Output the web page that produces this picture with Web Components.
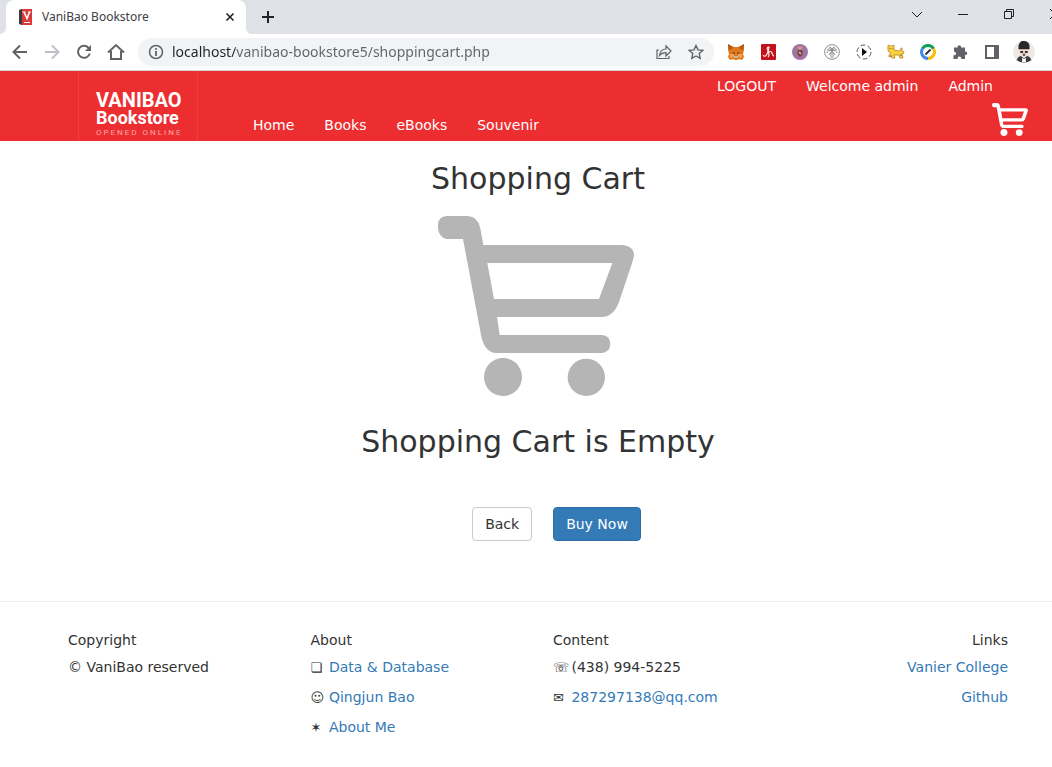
<!DOCTYPE html>
<html lang="en">
<head>
<meta charset="utf-8">
<title>VaniBao Bookstore</title>
<style>
html,body{margin:0;background:#fff;overflow-x:hidden}
body{font:14px/20px "DejaVu Sans",Verdana,sans-serif;color:#333}
</style>
</head>
<body>
<browser-frame>
  <browser-tabs></browser-tabs>
  <browser-toolbar></browser-toolbar>
</browser-frame>
<site-header></site-header>
<empty-cart></empty-cart>
<site-footer>
  <footer-column heading="Copyright">
    <footer-item>© VaniBao reserved</footer-item>
  </footer-column>
  <footer-column heading="About">
    <footer-item icon="❏" href="#data">Data &amp; Database</footer-item>
    <footer-item icon="☺" href="#author">Qingjun Bao</footer-item>
    <footer-item icon="✶" href="#about">About Me</footer-item>
  </footer-column>
  <footer-column heading="Content">
    <footer-item icon="☏">(438) 994-5225</footer-item>
    <footer-item icon="✉" href="#mail">287297138@qq.com</footer-item>
  </footer-column>
  <footer-column heading="Links" class="end">
    <footer-item href="#vanier">Vanier College</footer-item>
    <footer-item href="#github">Github</footer-item>
  </footer-column>
</site-footer>

<script>
const define = (name, html, setup) => customElements.define(name, class extends HTMLElement {
  constructor() {
    super();
    const t = document.createElement('template');
    t.innerHTML = html;
    this.attachShadow({mode: 'open'}).append(t.content.cloneNode(true));
  }
  connectedCallback() { if (setup) setup(this, this.shadowRoot); }
});

define('cart-icon', `
<style>:host{display:block;line-height:0}svg{width:100%;height:100%;fill:currentColor}</style>
<svg viewBox="54 198 588 540" aria-hidden="true">
<path fill-rule="evenodd" d="M80 198H142Q175 200 181 235L190 285H605Q643 288 642 318L636 340L597 456Q581 500 545 501H231L239 555H545Q571 557 571 582Q570 607 545 609H228Q195 607 184 560L129 267H80Q56 262 54 235V222Q56 200 80 198ZM202 339L222 447H537L577 339Z"/>
<circle cx="249" cy="681" r="57"/><circle cx="499" cy="682" r="56"/></svg>`);

define('browser-frame', `
<style>:host{display:block;background:#dee1e6;border-bottom:1px solid #d3d5d8;overflow:hidden;font-family:"Noto Sans","Open Sans",sans-serif}</style>
<slot></slot>`);

define('browser-tabs', `
<style>
:host{display:flex;height:34px;align-items:stretch;color:#3c4043}
button{border:0;background:none;padding:0;display:grid;place-items:center}
svg{display:block;fill:none;stroke:#202124}
.edge{width:6px;background:#fff}.edge i{display:block;height:100%;background:#dee1e6;border-bottom-right-radius:6px}
.edge.r i{border-radius:0 0 0 6px}
.tab{display:flex;align-items:center;width:240px;box-sizing:border-box;padding:0 8px 0 12px;background:#fff;border-radius:8px 8px 0 0;font-size:12px;line-height:16px}
.tab span{flex:1;padding-left:8px}
.tab button{width:16px;height:16px}
.new{width:32px}
.win{margin-left:auto;margin-right:-26px;display:flex;height:28px}
.win button{width:46px}
</style>
<div class="edge"><i></i></div>
<div class="tab">
<svg width="16" height="16" viewBox="0 0 16 16" style="stroke:none"><path fill="#dc3a36" d="M3 0h11v16H3z"/><path fill="#403a3a" d="M1 1L4 0V16L1 15Z"/><path d="M6 3l3 6.500 2.500-6.500" stroke="#fff" stroke-width="1.600"/><path d="M4.500 3h3M10 3h3M6 13.500h6" stroke="#fff"/></svg>
<span>VaniBao Bookstore</span>
<button aria-label="Close tab"><svg width="16" height="16" viewBox="0 0 16 16"><path stroke-width="1.600" d="M4.500 4.500l7 7M11.500 4.500l-7 7"/></svg></button>
</div>
<div class="edge r"><i></i></div>
<button class="new" aria-label="New tab"><svg width="16" height="16" viewBox="0 0 16 16"><path stroke-width="2" d="M8 2v12M2 8h12"/></svg></button>
<div class="win">
<button aria-label="Search tabs"><svg width="16" height="16" viewBox="0 0 16 16"><path d="M3 6l5 5 5-5"/></svg></button>
<button aria-label="Minimise"><svg width="16" height="16" viewBox="0 0 16 16"><path d="M3 8.500h10"/></svg></button>
<button aria-label="Restore"><svg width="16" height="16" viewBox="0 0 16 16"><path d="M3.500 5.500h7v7h-7zM5.500 5V3.500h7v7H11"/></svg></button>
<button aria-label="Close window"><svg width="16" height="16" viewBox="0 0 16 16"><path d="M3 3l10 10M13 3L3 13"/></svg></button>
</div>`);

define('browser-toolbar', `
<style>
:host{display:flex;height:36px;align-items:center;background:#fff;padding-left:4px;padding-right:28px}
button{border:0;background:none;padding:0;width:32px;height:32px;display:grid;place-items:center;flex:none}
svg{display:block;fill:none;stroke:#5f6368;stroke-width:2}
.omni{flex:1;min-width:0;height:28px;margin:0 6px;border-radius:14px;background:#f1f3f4;display:flex;align-items:center;padding:0 2px 0 10px}
input{flex:1;min-width:0;border:0;outline:0;padding:0 0 2px;margin-left:8px;height:24px;font:14px/20px "Noto Sans","Open Sans",sans-serif;color:#5f6368;background:linear-gradient(90deg,#202124 63px,#5f6368 63px);-webkit-background-clip:text;background-clip:text;-webkit-text-fill-color:transparent}
.n{stroke:none}
.me{margin-right:-16px}
</style>
<button aria-label="Back"><svg width="16" height="16" viewBox="0 0 16 16"><path d="M15 8H2M8 1.500L1.500 8 8 14.500"/></svg></button>
<button aria-label="Forward"><svg width="16" height="16" viewBox="0 0 16 16" style="stroke:#bdc1c6"><path d="M1 8h13M8 1.500L14.500 8 8 14.500"/></svg></button>
<button aria-label="Reload"><svg width="16" height="16" viewBox="0 0 16 16"><path d="M13.800 9.500A6 6 0 1 1 12.500 3.800L14 5.500"/><path class="n" fill="#5f6368" d="M15 1v6H9z"/></svg></button>
<button aria-label="Home"><svg width="18" height="18" viewBox="0 0 18 18"><path d="M1 9.500L9 2l8 7.500M4 8v8h10V8"/></svg></button>
<div class="omni">
<svg width="16" height="16" viewBox="0 0 16 16" style="stroke-width:1.500"><circle cx="8" cy="8" r="6.500"/><path stroke-width="1.800" d="M8 7v5M8 4v1.700"/></svg>
<input aria-label="Address" value="localhost/vanibao-bookstore5/shoppingcart.php">
<button aria-label="Share"><svg width="18" height="18" viewBox="0 0 18 18" style="stroke-width:1.200"><path d="M4 7H2v8.500h12V13M4.500 12.500C5 8 7 6 11 6V3l5 5-5 5V9.700C8 9.700 6 10.500 4.500 12.500Z"/></svg></button>
<button aria-label="Bookmark"><svg width="16" height="16" viewBox="0 0 16 16" style="stroke-width:1.400"><path d="M8 1.500l2 4.400 4.800.5-3.600 3.200 1 4.800L8 12l-4.200 2.400 1-4.800L1.200 6.400 6 5.900Z"/></svg></button>
</div>
<button aria-label="Fox wallet"><svg class="n" width="16" height="16" viewBox="0 0 16 16"><path fill="#e2761b" d="M0 0l6 3h4l6-3v6l-1 4 1 3-2 3-3-1-2 1H7l-2-1-3 1-2-3 1-3-1-4Z"/><path fill="#a85a20" d="M0 0l5 4-4 2ZM16 0l-5 4 4 2Z"/><path fill="#c9b8a8" d="M6 12h4v2H6Z"/><path fill="#f6a04a" d="M2 10h4v3L2 14ZM14 10h-4v3l4 1Z"/><path fill="#233447" d="M4 8l3 1-1 1ZM12 8L9 9l1 1Z"/></svg></button>
<button aria-label="PDF tools"><svg class="n" width="16" height="16" viewBox="0 0 16 16"><rect x="1" width="15" height="16" rx="1" fill="#c4121a"/><path fill="none" stroke="#fff" stroke-width="1.100" d="M3 11q2 3 4-1t2-7q-3 0-1 4t0 6M8 9q3-3 4 0t2 3"/></svg></button>
<button aria-label="Tor extension"><svg class="n" width="16" height="16" viewBox="0 0 16 16"><circle cx="8" cy="8" r="8" fill="#a074a4"/><path fill="#6b3f4c" d="M8 4c3 2 4 7 0 9-4-2-3-7 0-9"/><path fill="none" stroke="#e0a070" d="M6 3l2 2 2-2M7 8l2 2"/></svg></button>
<button aria-label="Tree extension"><svg width="16" height="16" viewBox="0 0 16 16" style="stroke:#8b8e90;stroke-width:1"><circle cx="8" cy="8" r="7.400"/><path d="M7 14V8M9 14V8M3 9q1-4 5-2 4-2 5 2M3 6q3-3 5 1 2-4 5-1M5 3q3 0 3 4 0-4 3-4M5 11l3-4 3 4"/></svg></button>
<button aria-label="Video extension"><svg width="16" height="16" viewBox="0 0 16 16" style="stroke:#555;stroke-width:1"><circle cx="8" cy="8" r="7" stroke-dasharray="5 2.300"/><path class="n" fill="#111" d="M6 4l5 4-5 4Z"/></svg></button>
<button aria-label="Cat extension"><svg width="18" height="16" viewBox="0 0 18 16" style="stroke:#b98224;stroke-width:.8"><path fill="#fbd23c" d="M1 1l2 1h2l2-1v5l5 1q2 0 2-3h1v3q2 0 2 2l-2 1 1 4h-3l-1-3H7l1 3H5l-1-2-2 1v-2l2-2-3-2Z"/><path stroke="#654" d="M3 4v1M5 4v1M3 12h2M13 11h2"/></svg></button>
<button aria-label="Compass extension"><svg width="16" height="16" viewBox="0 0 16 16" style="stroke-width:3"><path stroke="#109d58" d="M2.400 4.800A6.500 6.500 0 0 1 13.600 4.800"/><path stroke="#fbbc04" d="M13.600 4.800A6.500 6.500 0 0 1 8 14.500"/><path stroke="#4285f4" d="M8 14.500A6.500 6.500 0 0 1 2.400 4.800"/><path stroke="#333" stroke-width="2" d="M5.500 10.500l5-5"/></svg></button>
<button aria-label="Extensions"><svg class="n" width="16" height="16" viewBox="0 0 16 16"><path fill="#5f6368" d="M2 3.500h3.500V3a1.800 1.800 0 0 1 3.600 0v.5H13V7.400h.5a1.800 1.800 0 0 1 0 3.600H13v4H9.200v-.8a1.800 1.800 0 0 0-3.600 0v.8H1.500v-3.700h.8a1.800 1.800 0 0 0 0-3.600H2Z"/></svg></button>
<button aria-label="Side panel"><svg width="16" height="16" viewBox="0 0 16 16"><path d="M2 2h12v12H2z"/><path class="n" fill="#5f6368" d="M10 1h5v14h-5z"/></svg></button>
<button class="me" aria-label="Profile"><svg class="n" width="22" height="22" viewBox="0 0 24 24"><circle cx="12" cy="12" r="12" fill="#eee9e6"/><path fill="#3a3a44" d="M4 21q1-4 5-5l3 3 3-3q4 1 5 5-8 5-16 0"/><path fill="#f3d8cc" d="M7 8h10v5q-2 5-5 5t-5-5Z"/><path fill="#29282c" d="M6 9V5q2-6 6-5 5 0 6 5v4H6"/><path fill="none" stroke="#333" d="M8 12h3M13 12h3M11 15h2"/><path fill="#fff" d="M10 18l2 2 2-2v5h-4Z"/></svg></button>`);

define('nav-link', `
<style>:host{display:block}a{color:#fff;text-decoration:none;white-space:nowrap}</style>
<a><slot></slot></a>`, (el, root) => { root.querySelector('a').href = el.getAttribute('href'); });

define('site-header', `
<style>
:host{display:flex;height:70px;box-sizing:border-box;background:#ed2e31;color:#fff;padding:0 24px 0 78px}
.brand{display:block;width:120px;box-sizing:border-box;border:solid #ef3d40;border-width:0 1px;padding:20px 0 0 17px;color:#fff;text-decoration:none;overflow:hidden;font-family:Roboto,sans-serif;font-weight:700}
.brand span{display:block;white-space:nowrap}
.big{font-size:20px;line-height:18px}
.mid{font-size:18px;line-height:18px}
.small{font-size:8px;line-height:12px;font-weight:400;letter-spacing:2px;color:#f9a6a7}
nav{display:flex;gap:30px}
.main{align-items:flex-end;padding:0 0 6px 55px}
.side{margin-left:auto;display:flex;flex-direction:column;align-items:flex-end;padding-top:5px;gap:7px}
.side nav{padding-right:35px}
cart-icon{width:36px;height:33px}
.cart{color:#fff}
</style>
<a class="brand" href="#home"><span class="big">VANIBAO</span><span class="mid">Bookstore</span><span class="small">OPENED ONLINE</span></a>
<nav class="main" aria-label="Main"><nav-link href="#home">Home</nav-link><nav-link href="#books">Books</nav-link><nav-link href="#ebooks">eBooks</nav-link><nav-link href="#souvenir">Souvenir</nav-link></nav>
<div class="side">
<nav aria-label="Account"><nav-link href="#logout">LOGOUT</nav-link><nav-link href="#welcome">Welcome admin</nav-link><nav-link href="#admin">Admin</nav-link></nav>
<a class="cart" href="#cart" aria-label="Shopping cart"><cart-icon></cart-icon></a>
</div>`);

define('action-button', `
<style>
:host{display:block}
button{display:block;font:inherit;line-height:20px;padding:6px 12px;border:1px solid #ccc;border-radius:4px;background:#fff;color:#333}
:host([primary]) button{background:#337ab7;border-color:#2e6da4;color:#fff}
</style>
<button type="button"><slot></slot></button>`);

define('empty-cart', `
<style>
:host{display:flex;flex-direction:column;align-items:center;padding:21px 0 60px 24px}
h1,h2{margin:0;font-size:30px;line-height:34px;font-weight:400;text-align:center}
cart-icon{width:196px;height:180px;margin:20px 4px 29px 0;color:#b5b5b5}
.actions{display:flex;gap:21px;padding:48px 0 0 37px}
</style>
<h1>Shopping Cart</h1>
<cart-icon></cart-icon>
<h2>Shopping Cart is Empty</h2>
<div class="actions"><action-button>Back</action-button><action-button primary>Buy Now</action-button></div>`);

define('site-footer', `
<style>
:host{display:block;border-top:1px solid #eee;padding:28px 0 20px 24px}
div{display:grid;grid-template-columns:repeat(4,1fr);max-width:970px;margin:0 auto}
::slotted(.end){text-align:right}
</style>
<div><slot></slot></div>`);

define('footer-column', `
<style>
:host{display:block;padding:0 15px}
h3{margin:0 0 7px;font:inherit}
.list{display:grid;gap:10px}
</style>
<h3></h3><div class="list"><slot></slot></div>`, (el, root) => { root.querySelector('h3').textContent = el.getAttribute('heading'); });

define('footer-item', `
<style>
:host{display:block;white-space:nowrap}
a{color:#337ab7;text-decoration:none}
i{font-style:normal;font-size:13px;line-height:16px;display:inline-block;width:14px}
</style>
<slot></slot>`, (el, root) => {
  const icon = el.getAttribute('icon'), href = el.getAttribute('href');
  if (href) {
    const a = document.createElement('a');
    a.href = href;
    a.append(root.querySelector('slot'));
    root.append(a);
  }
  if (icon) {
    const i = document.createElement('i');
    i.textContent = icon;
    root.querySelector('style').after(i);
  }
});
</script>
</body>
</html>
